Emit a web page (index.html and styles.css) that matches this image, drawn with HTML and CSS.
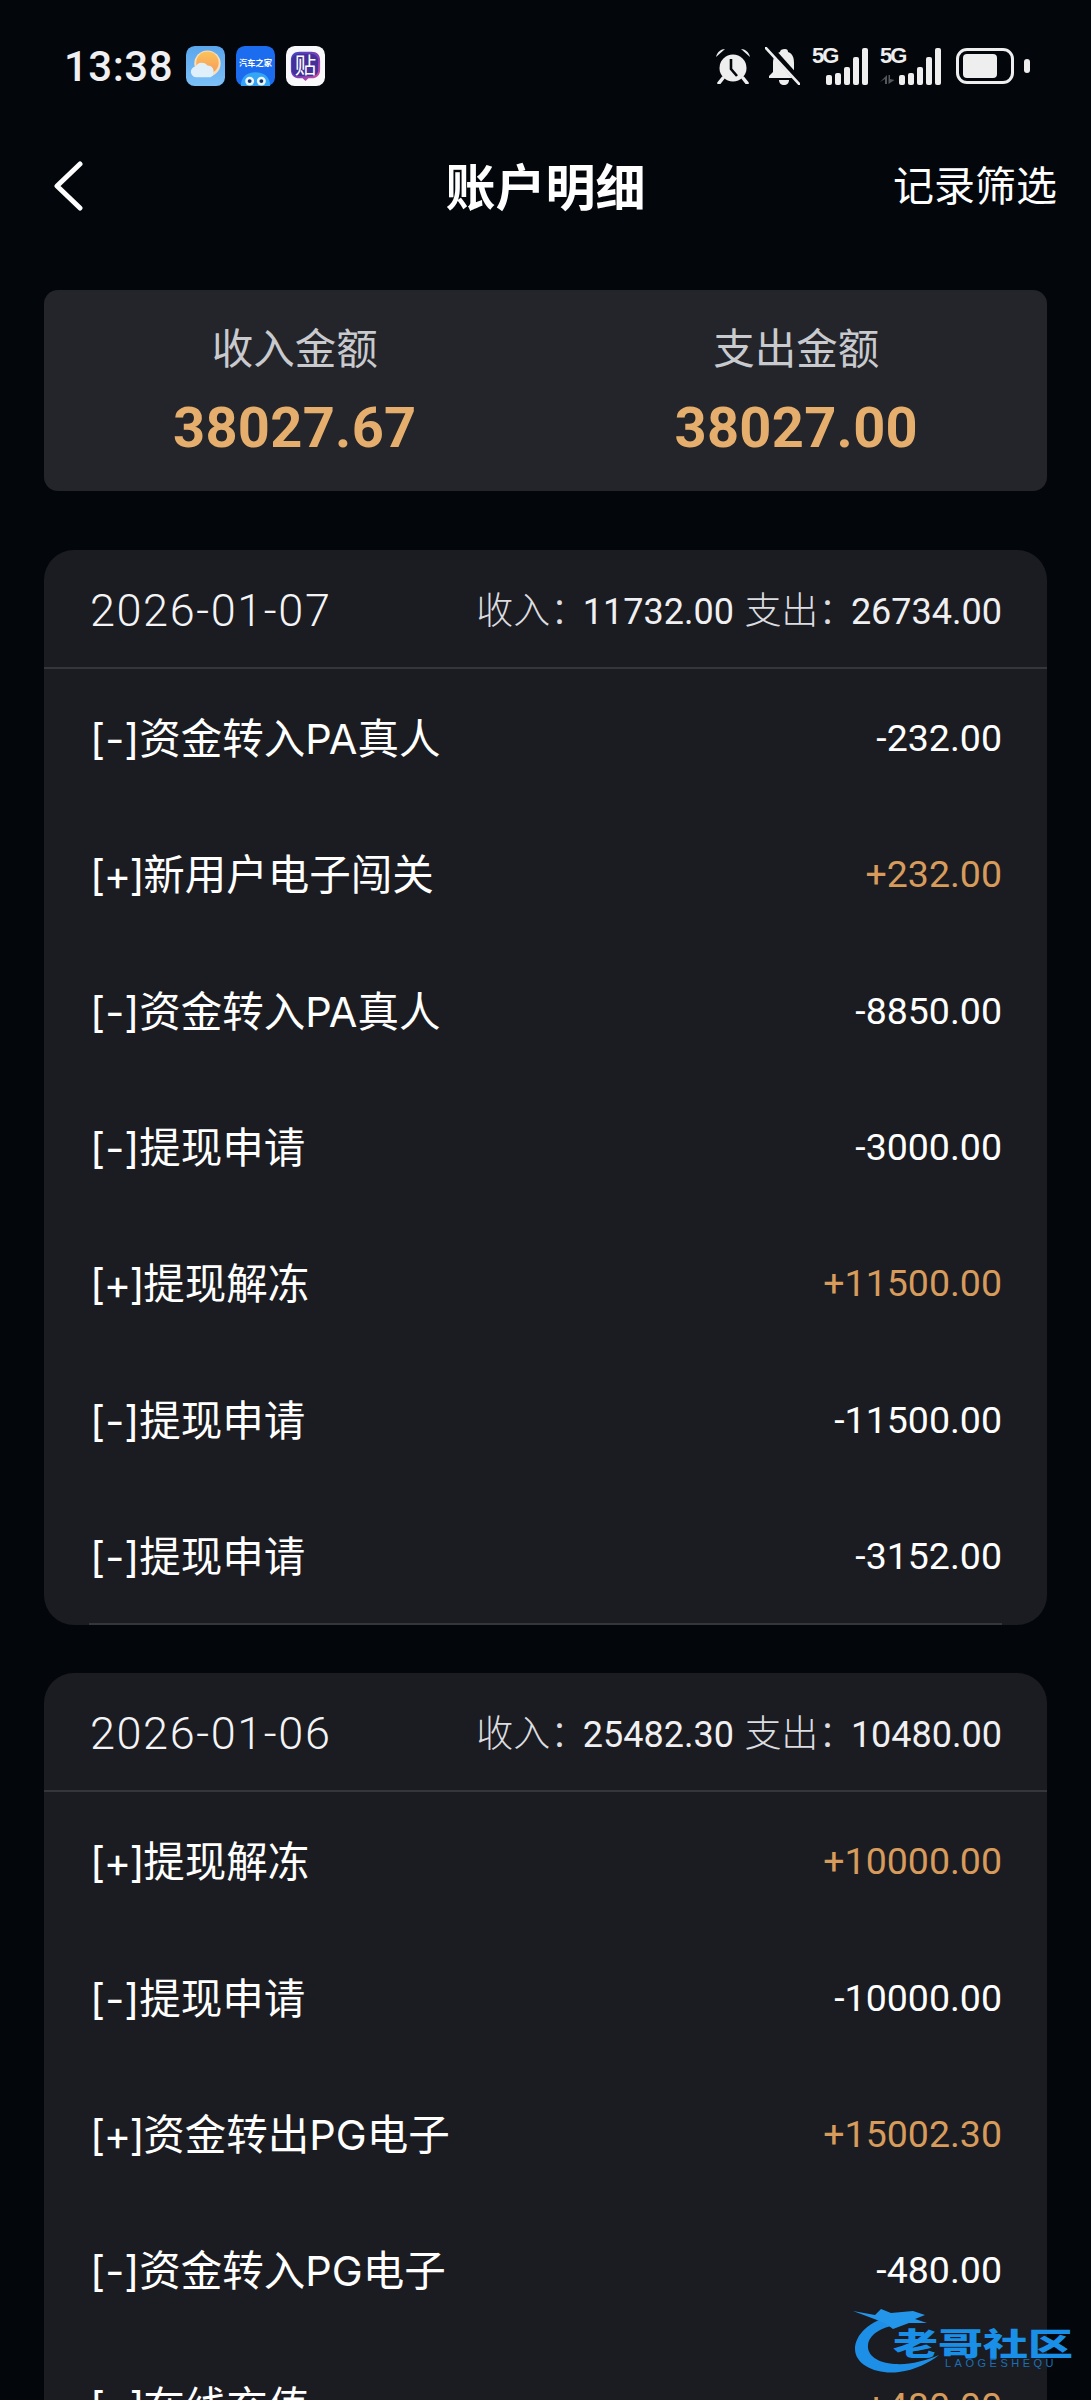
FILE: index.html
```html
<!DOCTYPE html>
<html lang="zh-CN">
<head>
    <meta charset="UTF-8">
    <meta name="viewport" content="width=device-width, initial-scale=1.0">
    <title>账户明细</title>
    <link rel="stylesheet" href="styles.css">
</head>
<body>
    <div class="page">
        <div class="status-bar">
            <div class="status-left">
                <span class="clock">13:38</span>
                <svg class="app-icon" viewBox="0 0 40 41">
                    <defs>
                        <linearGradient id="skyFill" x1="0" y1="0" x2="0" y2="1">
                            <stop offset="0" stop-color="#5aa6ee"/>
                            <stop offset="1" stop-color="#7cc0f6"/>
                        </linearGradient>
                        <linearGradient id="sunFill" x1="0" y1="0" x2="0" y2="1">
                            <stop offset="0" stop-color="#fcc35a"/>
                            <stop offset="1" stop-color="#f59a5c"/>
                        </linearGradient>
                    </defs>
                    <rect width="40" height="41" rx="9" fill="url(#skyFill)"/>
                    <circle cx="22" cy="18" r="13.500" fill="#f8dfb8"/>
                    <circle cx="22" cy="17" r="11.500" fill="url(#sunFill)"/>
                    <path d="M11 32a5.500 5.500 0 0 1-1-11 7 7 0 0 1 12-1 6 6 0 0 1 6 8 4 4 0 0 1-3 4z" fill="#dff0fa"/>
                </svg>
                <svg class="app-icon" viewBox="0 0 40 41">
                    <rect width="40" height="41" rx="9" fill="#1c6cf0"/>
                    <text x="20" y="20" class="app-icon-label">汽车之家</text>
                    <path d="M5 41c0-9 6-14 15-14s15 5 15 14z" fill="#35a5f5"/>
                    <circle cx="14" cy="36" r="4.600" fill="#e9f6ff"/>
                    <circle cx="26" cy="36" r="4.600" fill="#e9f6ff"/>
                    <circle cx="14" cy="36" r="2" fill="#12326b"/>
                    <circle cx="26" cy="36" r="2" fill="#12326b"/>
                </svg>
                <svg class="app-icon" viewBox="0 0 40 41">
                    <defs>
                        <linearGradient id="tiebaEdge" x1="0" y1="0" x2="1" y2="1">
                            <stop offset="0" stop-color="#3b46c8"/>
                            <stop offset="0.6" stop-color="#8a3fb4"/>
                            <stop offset="1" stop-color="#e0579a"/>
                        </linearGradient>
                    </defs>
                    <rect width="40" height="41" rx="9" fill="#f8f8fb"/>
                    <path d="M14 6h12c6 0 9 3 9 9v9c0 6-3 9-9 9h-3l-3 3-3-3h-3c-6 0-9-3-9-9v-9c0-6 3-9 9-9z" fill="url(#tiebaEdge)"/>
                    <path d="M14 8h11c5 0 8 3 8 7v9c0 5-3 7-8 7H14c-5 0-8-2-8-7v-9c0-4 3-7 8-7z" fill="#43309a"/>
                    <text x="20" y="27.500" class="app-icon-glyph">贴</text>
                </svg>
            </div>
            <div class="status-right">
                <svg class="alarm-icon" viewBox="0 0 36 36">
                    <circle cx="18" cy="20" r="13.500" fill="#eeeeee"/>
                    <path d="M1 9C2 4 6 1 10 1z" fill="#eeeeee"/>
                    <path d="M35 9C34 4 30 1 26 1z" fill="#eeeeee"/>
                    <path d="M8 30 4 35M28 30l4 5" stroke="#eeeeee" stroke-width="3.500" stroke-linecap="round"/>
                    <path d="M16 11v10l6 7" fill="none" stroke="#03070c" stroke-width="2.600"/>
                </svg>
                <svg class="bell-icon" viewBox="0 0 35 38">
                    <path d="M20 2c2 0 3 1 3 3 5 2 6 6 6 11v9l4 4v2H4v-2l4-4V16c0-5 2-9 7-11 0-2 2-3 5-3z" fill="#eeeeee"/>
                    <path d="M14 33h10c0 3-2 5-5 5s-5-2-5-5z" fill="#eeeeee"/>
                    <path d="M2 -2 36 36" stroke="#03070c" stroke-width="6.500"/>
                    <path d="M0 0 35 38" stroke="#eeeeee" stroke-width="2.600"/>
                </svg>
                <div class="signal">
                    <span class="signal-label">5G</span>
                    <div class="bars"><i class="bar-1"></i><i class="bar-2"></i><i class="bar-3"></i><i class="bar-4"></i><i class="bar-5"></i></div>
                </div>
                <div class="signal signal-data">
                    <span class="signal-label">5G</span>
                    <svg class="data-arrows" viewBox="0 0 15 9">
                        <path d="M7 0v9H5V4L0 7zM8.500 0v9l6-4-4.500-1V0z" fill="#55575b"/>
                    </svg>
                    <div class="bars"><i class="bar-1"></i><i class="bar-2"></i><i class="bar-3"></i><i class="bar-4"></i><i class="bar-5"></i></div>
                </div>
                <div class="battery">
                    <div class="battery-body"><div class="battery-level"></div></div>
                    <div class="battery-cap"></div>
                </div>
            </div>
        </div>

        <div class="nav-bar">
            <svg class="back-icon" viewBox="0 0 30 50">
                <path d="M27 3 4 25l23 22" fill="none" stroke="#fff" stroke-width="5" stroke-linecap="round" stroke-linejoin="round"/>
            </svg>
            <h1>账户明细</h1>
            <span class="nav-action">记录筛选</span>
        </div>

        <div class="summary">
            <div class="summary-col">
                <div class="summary-label">收入金额</div>
                <div class="summary-value">38027.67</div>
            </div>
            <div class="summary-col">
                <div class="summary-label">支出金额</div>
                <div class="summary-value">38027.00</div>
            </div>
        </div>

        <div class="day-card">
            <div class="day-head">
                <span class="day-date">2026-01-07</span>
                <span class="day-stats">收入：<b>11732.00</b> 支出：<b>26734.00</b></span>
            </div>
            <div class="row"><span class="row-name">[-]资金转入PA真人</span><span class="row-amount">-232.00</span></div>
            <div class="row"><span class="row-name"><span class="plus">[+]</span>新用户电子闯关</span><span class="row-amount gold">+232.00</span></div>
            <div class="row"><span class="row-name">[-]资金转入PA真人</span><span class="row-amount">-8850.00</span></div>
            <div class="row"><span class="row-name">[-]提现申请</span><span class="row-amount">-3000.00</span></div>
            <div class="row"><span class="row-name"><span class="plus">[+]</span>提现解冻</span><span class="row-amount gold">+11500.00</span></div>
            <div class="row"><span class="row-name">[-]提现申请</span><span class="row-amount">-11500.00</span></div>
            <div class="row"><span class="row-name">[-]提现申请</span><span class="row-amount">-3152.00</span></div>
            <div class="day-foot"></div>
        </div>

        <div class="day-card">
            <div class="day-head">
                <span class="day-date">2026-01-06</span>
                <span class="day-stats">收入：<b>25482.30</b> 支出：<b>10480.00</b></span>
            </div>
            <div class="row"><span class="row-name"><span class="plus">[+]</span>提现解冻</span><span class="row-amount gold">+10000.00</span></div>
            <div class="row"><span class="row-name">[-]提现申请</span><span class="row-amount">-10000.00</span></div>
            <div class="row"><span class="row-name"><span class="plus">[+]</span>资金转出PG电子</span><span class="row-amount gold">+15002.30</span></div>
            <div class="row"><span class="row-name">[-]资金转入PG电子</span><span class="row-amount">-480.00</span></div>
            <div class="row"><span class="row-name"><span class="plus">[+]</span>在线充值</span><span class="row-amount gold">+480.00</span></div>
        </div>

        <div class="watermark">
            <svg class="watermark-dragon" viewBox="0 0 90 72">
                <path d="M40 10C16 16 2 30 2 44c0 16 22 26 44 23 16-2 30-9 40-17-14 6-30 10-44 9-18-1-28-9-27-19 1-10 13-18 29-20z" fill="#1d8fe6"/>
                <path d="M0 6l22 4 6-6 10 4 22-2 12 4-10 4 12 4H56L40 24l-8-6z" fill="#2496ea"/>
            </svg>
            <span class="watermark-name">老哥社区</span>
            <span class="watermark-sub">LAOGESHEQU</span>
        </div>
    </div>
</body>
</html>
```

FILE: styles.css
```css
* {
    box-sizing: border-box;
    margin: 0;
    padding: 0;
}

body {
    background-color: #03070c;
    font-family: Inter, "Noto Sans CJK SC", sans-serif;
    color: #fff;
}

.page {
    position: relative;
    width: 1091px;
    height: 2400px;
    overflow: hidden;
    padding: 0 44px;
}

.status-bar {
    height: 132px;
    margin: 0 -44px;
    padding: 0 61px 0 64px;
    display: flex;
    justify-content: space-between;
    align-items: center;
}

.status-left {
    display: flex;
    align-items: center;
    gap: 11px;
}

.clock {
    font-family: Roboto, sans-serif;
    font-size: 42px;
    font-weight: 500;
    color: #f0f0f2;
    margin-right: 2px;
    letter-spacing: 0.5px;
}

.app-icon {
    width: 39px;
    height: 40px;
}

.app-icon-label {
    font-family: "Noto Sans CJK SC", sans-serif;
    font-size: 8.500px;
    fill: #fff;
    text-anchor: middle;
    font-weight: 700;
}

.app-icon-glyph {
    font-family: "Noto Sans CJK SC", sans-serif;
    font-size: 22px;
    fill: #fff;
    text-anchor: middle;
}

.status-right {
    display: flex;
    align-items: center;
    gap: 12px;
}

.alarm-icon {
    width: 36px;
    height: 36px;
    margin-right: 2px;
}

.bell-icon {
    width: 35px;
    height: 38px;
}

.signal {
    position: relative;
    width: 56px;
    height: 37px;
    display: flex;
    justify-content: flex-end;
}

.signal-data {
    width: 61px;
    margin-right: 3px;
}

.signal-label {
    position: absolute;
    left: 0;
    top: -1px;
    font-family: "Liberation Sans", sans-serif;
    font-size: 22px;
    line-height: 18px;
    font-weight: 700;
    color: #eeeeee;
    letter-spacing: -2px;
}

.data-arrows {
    position: absolute;
    left: 0;
    bottom: 1px;
    width: 15px;
    height: 9px;
}

.bars {
    display: flex;
    align-items: flex-end;
    gap: 3px;
}

.bars i {
    display: block;
    width: 6px;
    background-color: #eeeeee;
    border-radius: 2px;
}

.bar-1 { height: 10px; }
.bar-2 { height: 12px; }
.bar-3 { height: 18px; }
.bar-4 { height: 28px; }
.bar-5 { height: 37px; }

.battery {
    display: flex;
    align-items: center;
    gap: 10px;
}

.battery-body {
    width: 58px;
    height: 36px;
    border: 3px solid #eeeeee;
    border-radius: 11px;
    padding: 3px 4px;
}

.battery-level {
    width: 34px;
    height: 100%;
    background-color: #eeeeee;
    border-radius: 4px;
}

.battery-cap {
    width: 6px;
    height: 14px;
    background-color: #eeeeee;
    border-radius: 3px;
}

.nav-bar {
    position: relative;
    height: 110px;
    margin-top: -1px;
    padding-bottom: 5px;
    display: flex;
    align-items: center;
    justify-content: center;
}

.back-icon {
    position: absolute;
    left: 9px;
    top: 30px;
    width: 30px;
    height: 50px;
}

h1 {
    font-family: "Noto Sans CJK SC", sans-serif;
    font-size: 50px;
    font-weight: 700;
    line-height: 1;
}

.nav-action {
    position: absolute;
    right: -10px;
    top: 25px;
    font-size: 41px;
    line-height: 60px;
    font-weight: 400;
}

.summary {
    margin-top: 49px;
    height: 201px;
    display: flex;
    background-color: #23252b;
    border-radius: 14px;
}

.summary-col {
    flex: 1;
    text-align: center;
    padding-top: 31px;
}

.summary-label {
    font-size: 41.500px;
    line-height: 56px;
    font-weight: 400;
    color: #c9cace;
}

.summary-value {
    margin-top: 19px;
    font-family: Roboto, sans-serif;
    font-size: 56px;
    line-height: 64px;
    font-weight: 700;
    color: #e6ae6c;
    letter-spacing: 0.3px;
}

.day-card {
    margin-top: 48px;
    background-color: #1b1c21;
    border-radius: 30px;
}

.summary + .day-card {
    margin-top: 59px;
}

.day-head {
    height: 119px;
    padding: 0 45px 0 46px;
    display: flex;
    justify-content: space-between;
    align-items: center;
    border-bottom: 2px solid #34363b;
}

.day-date {
    font-family: Roboto, sans-serif;
    font-size: 45px;
    font-weight: 300;
    letter-spacing: 1.600px;
    color: #f4f4f6;
    margin-top: 3px;
}

.day-stats {
    font-size: 37px;
    font-weight: 300;
    color: #dcdde0;
    margin-top: -2px;
}

.day-stats b {
    font-family: Roboto, sans-serif;
    font-weight: 400;
    font-size: 36px;
    margin-left: -4.500px;
    color: #f0f0f2;
}

.row {
    height: 136.300px;
    padding: 0 45px 0 46px;
    display: flex;
    justify-content: space-between;
    align-items: center;
}

.row-name {
    font-size: 41.500px;
    font-weight: 400;
    margin-top: -2px;
}

.plus {
    letter-spacing: -1.500px;
}

.row-amount {
    font-family: Roboto, sans-serif;
    font-size: 37.500px;
    font-weight: 400;
    margin-top: 2px;
}

.row-amount.gold {
    color: #d79b5c;
}

.day-foot {
    height: 2px;
    margin: 0 45px;
    background-color: #34363b;
}

.watermark {
    position: absolute;
    left: 853px;
    top: 2305px;
    width: 226px;
    height: 72px;
}

.watermark-dragon {
    position: absolute;
    left: 0;
    top: 0;
    width: 90px;
    height: 72px;
}

.watermark-name {
    position: absolute;
    left: 40px;
    top: 12px;
    font-family: "Noto Sans CJK SC", sans-serif;
    font-size: 45px;
    line-height: 50px;
    font-weight: 900;
    color: #1a8fe8;
    white-space: nowrap;
    transform: scaleY(0.68);
}

.watermark-sub {
    position: absolute;
    left: 92px;
    top: 52px;
    font-family: "Liberation Sans", sans-serif;
    font-size: 11px;
    color: #1c6fb4;
    letter-spacing: 3.500px;
    white-space: nowrap;
}
```
